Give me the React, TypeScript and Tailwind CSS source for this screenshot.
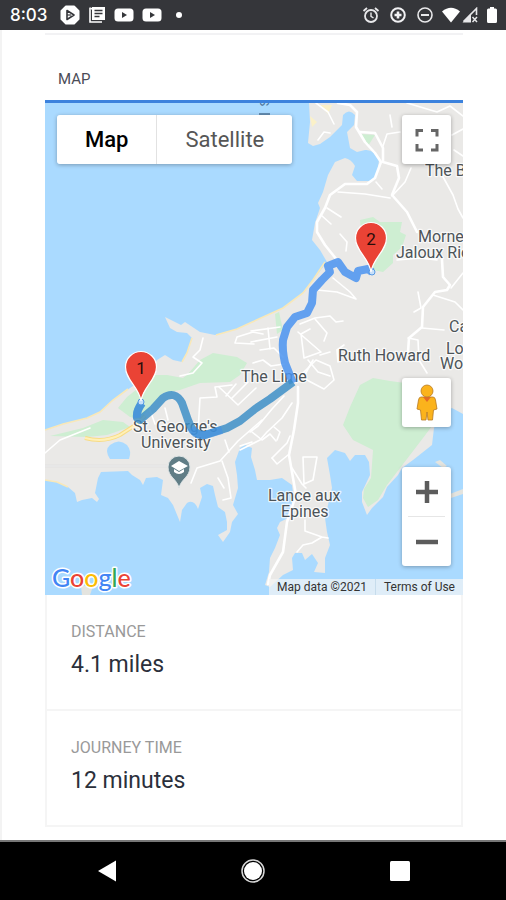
import React, { useState } from "react";

const mapFont = "font-['Roboto',sans-serif]";

const LAND =
  "M309 103 L310 122 L308 143 L313 146 L320 144 L330 137 L342 125 L343 115 Q349 108 355 115 L354 125 L347 132 L350 148 L357 152 L365 150 Q374 149 379 160 L377 175 Q374 182 368 181 L357 181 L352 175 L355 166 Q351 159 345 158 L335 162 L328 175 L323 192 L318 203 L320 208 L315 223 L312 240 L320 250 L327 262 L313 280 L303 293 L283 308 L250 323 L237 329 L215 335 L200 332 L185 322 L181 325 L173 321 L165 317 L170 328 L177 332 L187 333 L192 338 L187 353 L182 362 L173 360 L165 355 L157 360 L148 376 L130 388 L113 400 L100 412 L87 418 L63 424 L45 430 V480 L57 482 L68 487 L75 493 L77 502 L82 500 L92 498 L97 502 L99 499 L95 493 L98 478 L101 472 L128 471 L132 475 L140 480 L143 485 L146 478 L157 477 L163 480 L161 495 L168 498 L173 505 L180 522 L182 510 L187 503 Q194 499 198 509 L202 497 L200 488 L207 484 L213 486 L215 495 L218 507 L225 512 L227 522 L227 530 L218 535 L223 542 L230 532 L232 522 L238 514 L233 505 L238 488 L237 475 L235 462 L240 448 L245 445 L252 448 L251 457 L255 470 L257 480 L270 480 L282 478 L292 485 L294 500 L288 518 L280 522 L277 528 L280 535 L275 548 L270 558 L269 572 L265 585 L270 587 L283 575 L293 570 L292 558 L295 553 L302 553 L305 560 L312 554 L318 563 L314 572 L325 573 L325 558 L330 545 L327 532 L325 518 L328 505 L332 488 L330 475 L327 458 L335 450 L345 453 L350 461 L355 455 L365 455 L369 462 L370 475 L362 492 L362 502 L367 515 L372 508 L383 497 L387 487 L398 475 L402 468 L413 460 L432 445 L434 428 L440 413 L452 408 L463 414 V103 Z";

const PARKS = [
  "M213 353 L237 357 L247 363 L240 375 L230 382 L200 383 L180 390 L163 393 L150 407 L140 420 L130 417 L118 408 L127 397 L155 375 L167 375 L183 378 L188 374 L200 360 Z",
  "M50 436 L83 428 L103 420 L123 422 L130 427 L107 435 L87 437 Z",
  "M360 220 L373 217 L380 222 L402 222 L400 232 L406 235 L402 247 L393 255 L393 263 L383 272 L373 270 L362 240 Z",
  "M360 134 L375 135 L368 146 Z",
  "M373 378 L390 381 L405 383 L430 390 L432 426 L423 438 L410 455 L397 472 L387 485 L378 500 L368 507 L363 498 L364 489 L371 478 L373 450 L353 440 L343 425 L350 407 L360 385 Z",
  "M275 314 L279 312 L283 330 L277 334 Z",
];

const MAIN_ROADS = [
  "M338 103 L350 105 L357 112 L356 127 L365 142 L375 153 L381 162 L375 178 L367 184 L345 184 L330 195 L325 208 L317 222 L317 232 L325 245 L337 260",
  "M298 387 L298 403 L294 430 L289 455 L293 478 L296 495 L287 522 L283 552 L270 575 L268 584",
  "M442 260 L443 277 L450 285 L447 290 L435 292 L423 307 L422 327 L409 338 L408 352",
  "M360 132 L375 133 L383 148 L383 162 L397 166 L399 178 L392 195 L407 212 L417 232",
];

const ROADS = [
  "M338 192 L365 194 L390 198",
  "M383 146 L387 134 L400 132",
  "M392 196 L405 182 L411 168",
  "M442 175 L453 195 L458 209 L463 218",
  "M407 103 L437 112 L450 106 L463 116",
  "M390 115 L392 127",
  "M452 135 L463 129 M454 150 L463 156",
  "M327 208 L341 217 M321 215 L331 224",
  "M340 234 L347 242 L346 251 M376 182 L382 189",
  "M316 103 L328 112 L334 124 M318 140 L324 132 L330 133",
  "M397 260 L420 258 L437 260 M451 288 L463 273",
  "M433 295 L455 302 L463 310",
  "M418 292 L421 308 L414 312",
  "M422 328 L444 330 M408 338 L418 340 L419 360 L427 373",
  "M317 290 L337 292 L356 299 M333 278 L350 292 L356 299",
  "M300 324 L315 318 L330 316 L336 322 L343 321",
  "M315 319 L327 333 L324 341",
  "M298 332 L321 352 L304 358 L301 334 L310 329",
  "M293 383 L300 376 L316 360 L330 366 L334 380 L324 389 L303 378",
  "M308 360 L318 372 L330 376 M338 362 L337 350 L344 345",
  "M320 355 L330 352 M303 378 L313 360",
  "M251 331 L280 327 M251 342 L277 337",
  "M260 350 L274 348 L283 357 M268 328 L270 349",
  "M253 363 L263 360 L271 366 L284 364",
  "M284 396 L272 409 L258 426 L250 432",
  "M292 403 L282 418 L267 432 L260 440 L240 450",
  "M272 458 L287 443 L290 436 M252 432 L262 440 L270 434 L276 441",
  "M288 455 L277 464 L272 458 M274 427 L280 432 L277 440",
  "M303 457 L317 457 L313 480 L304 484 L303 457 M292 468 L302 484 L306 488",
  "M297 552 L303 545 L312 543 L322 537 L328 538 M305 520 L305 531 L322 537",
  "M203 338 L200 350 L193 357 L202 363 L193 373 L180 376",
  "M198 432 L200 398 L217 397 L215 387 L232 385",
  "M219 387 L238 405 M226 396 L236 384 M232 398 L248 382 M238 405 L256 388",
  "M237 337 L253 332 L263 334 M235 343 L254 344 M237 337 L235 343",
  "M262 420 L238 441 L220 461 L197 468 L191 483",
  "M222 461 L228 478 L231 498 L223 500 M218 478 L224 488",
  "M225 440 L229 452 M240 446 L252 442",
  "M45 453 L60 440 L90 428 M150 410 L155 424 M165 408 L168 420",
];

const LABELS = [
  { x: 425, y: 176, text: "The B" },
  { x: 418, y: 242, text: "Morne" },
  { x: 396, y: 258, text: "Jaloux Ric" },
  { x: 449, y: 332, text: "Ca" },
  { x: 446, y: 354, text: "Lo" },
  { x: 440, y: 369, text: "Wo" },
  { x: 338, y: 361, text: "Ruth Howard" },
  { x: 241, y: 382, text: "The Lime" },
  { x: 133, y: 432, text: "St. George's" },
  { x: 141, y: 448, text: "University" },
  { x: 268, y: 501, text: "Lance aux" },
  { x: 281, y: 517, text: "Epines" },
];

const PINS = [
  { x: 141, y: 367, label: "1" },
  { x: 371, y: 238, label: "2" },
];

const LOGO = [
  { char: "G", fill: "#4285f4" },
  { char: "o", fill: "#ea4335" },
  { char: "o", fill: "#fbbc05" },
  { char: "g", fill: "#4285f4" },
  { char: "l", fill: "#34a853" },
  { char: "e", fill: "#ea4335" },
];

const STATS = [
  { label: "DISTANCE", value: "4.1 miles" },
  { label: "JOURNEY TIME", value: "12 minutes" },
];

function StatusBar() {
  return (
    <header className="h-[30px] bg-[#35363a] flex items-center justify-between pl-[10px] pr-2 text-white">
      <div className="flex items-center">
        <span className="font-['Inter',sans-serif] font-medium text-[17px] leading-5">8:03</span>
        <svg className="ml-3 w-5 h-5" viewBox="0 0 20 20" fill="none">
          <path d="M6 1.500 H14 L18.500 6 V14 L14 18.500 H6 L1.500 14 V6 Z" fill="#fff" stroke="#fff" strokeWidth="2" strokeLinejoin="round" />
          <path d="M7 5.500 L14 10 L7 14.500 Z" stroke="#35363a" strokeWidth="1.6" strokeLinejoin="round" />
          <path d="M7 10 H11" stroke="#35363a" strokeWidth="1.2" />
        </svg>
        <svg className="ml-2 w-[18px] h-[18px]" viewBox="0 0 18 18">
          <path d="M2 2 V16 H14" fill="none" stroke="#fff" strokeWidth="1.6" />
          <path d="M1 1 L4 2 V1 H17 V14 H4 V4 Z" fill="#fff" />
          <path d="M6.5 4.5 H14.5 M6.5 7.5 H14.5 M6.5 10.5 H11.5" stroke="#35363a" strokeWidth="1.3" />
        </svg>
        {[0, 1].map(i => (
          <svg key={i} className="ml-2 w-5 h-4" viewBox="0 0 20 16">
            <rect x="0.5" y="1.5" width="19" height="13" rx="3.5" fill="#fff" />
            <path d="M8 5 L13 8 L8 11 Z" fill="#35363a" />
          </svg>
        ))}
        <span className="ml-[14px] w-[6px] h-[6px] rounded-full bg-white" />
      </div>

      <div className="flex items-center">
        <svg className="w-[18px] h-[18px]" viewBox="0 0 18 18" fill="none" stroke="#e8e8ea">
          <circle cx="9" cy="10" r="6" strokeWidth="1.8" />
          <path d="M9 6.5 V10.3 L11.5 12" strokeWidth="1.4" />
          <path d="M1.5 5 L5 2 M16.5 5 L13 2" strokeWidth="1.8" />
        </svg>
        <svg className="ml-[9px] w-[18px] h-[18px]" viewBox="0 0 18 18" fill="none" stroke="#f1f1f3">
          <circle cx="9" cy="9" r="6.8" strokeWidth="2" />
          <path d="M9 5.5 V12.5 M5.5 9 H12.5" strokeWidth="2.6" />
        </svg>
        <svg className="ml-[9px] w-[18px] h-[18px]" viewBox="0 0 18 18" fill="none" stroke="#e8e8ea">
          <circle cx="9" cy="9" r="7" strokeWidth="1.6" />
          <path d="M5 9 H13" strokeWidth="2" />
        </svg>
        <svg className="ml-2 w-[18px] h-4" viewBox="0 0 18 16">
          <path d="M0 4.5 Q9 -3 18 4.5 L9 15.5 Z" fill="#fff" />
        </svg>
        <svg className="ml-[2px] w-4 h-4" viewBox="0 0 16 16">
          <path d="M1.5 14.5 L14.5 1.5 V8" fill="none" stroke="#e8e8ea" strokeWidth="1.6" />
          <path d="M0.5 15.5 L9 6.5 V15.5 Z" fill="#e8e8ea" />
          <path d="M10.5 10 L15 15 M15 10 L10.5 15" stroke="#e8e8ea" strokeWidth="1.5" />
        </svg>
        <svg className="ml-2 w-3 h-4" viewBox="0 0 12 16">
          <path d="M4 0 H8 V1.5 H9.5 Q11 1.5 11 3 V14.5 Q11 16 9.5 16 H2.5 Q1 16 1 14.5 V3 Q1 1.5 2.5 1.5 H4 Z" fill="#fff" />
        </svg>
      </div>
    </header>
  );
}

function MapCanvas() {
  return (
    <svg
      className={`block w-full h-full ${mapFont}`}
      viewBox="45 103 418 492"
      preserveAspectRatio="xMidYMid slice"
    >
      <rect x="45" y="103" width="418" height="492" fill="#aadaff" />
      <path d={LAND} fill="#eae9e7" />
      <path d="M435 462 L440 460 L447 466 L443 468 Z M450 494 L463 489 V494 L451 498 Z M82 595 L81 586 H93 L90 595 Z" fill="#e4e4df" />
      {PARKS.map(d => (
        <path key={d} d={d} fill="#ceeed2" />
      ))}

      {/* Beaches */}
      <path
        d="M325 262 L313 280 L303 293 L283 308 L250 323 L237 329 L216 335 M192 338 L187 353 L182 362 M128 389 L113 400 L100 412 L87 418 L63 424 L45 430 M45 480 L57 482 L68 487"
        fill="none"
        stroke="#f9e8b8"
        strokeWidth="1.6"
      />
      <path d="M310 116 L317 122 L312 127 Z M320 105 H332 L328 114 Z" fill="#fbf1c8" />
      <path d="M110 459 Q104 450 110 445 Q119 438 127 445 Q132 451 129 459 Z" fill="#aadaff" />
      <path d="M45 466 H167" stroke="#dcdcdc" strokeWidth="2.5" />
      <path d="M45 466 H167" stroke="#f2f2f2" strokeWidth="1" />

      <g fill="none" stroke="#fff" strokeLinejoin="round" strokeLinecap="round">
        {ROADS.map(d => (
          <path key={d} d={d} strokeWidth="1.6" />
        ))}
        {MAIN_ROADS.map(d => (
          <path key={d} d={d} strokeWidth="2.6" />
        ))}
      </g>
      <path d="M85 438 Q104 443 120 435 L137 424 L145 416" fill="none" stroke="#f8dc84" strokeWidth="4" />
      <path d="M85 438 Q104 443 120 435 L137 424 L145 416" fill="none" stroke="#fff0b8" strokeWidth="2" />

      {/* University marker */}
      <path d="M179 488 C177 479 168 477 168 467 A11 11 0 0 1 190 467 C190 477 181 479 179 488 Z" fill="#607d86" stroke="#dfe5e6" strokeWidth="1" />
      <path d="M171 466 L179 461 L188 466 L179 471 Z M174 469 V472 Q179 476 184 472 V469 L179 472 Z" fill="#fff" />

      <g fill="#4d5458" stroke="#fff" strokeOpacity="0.75" strokeWidth="2.5" strokeLinejoin="round" paintOrder="stroke" fontSize="16">
        {LABELS.map(l => (
          <text key={l.text} x={l.x} y={l.y}>
            {l.text}
          </text>
        ))}
      </g>
      <text x="99" y="-260" transform="rotate(90)" fontSize="12" fill="#4d7398">
        S
      </text>
      <path d="M259 114 H270" stroke="#4d7398" strokeWidth="1.5" />

      <g fill="none" strokeWidth="8" strokeLinejoin="round">
        <path
          d="M293 383 L285 363 Q282 350 283 340 L287 327 L295 317 L307 313 L312 303 L313 290 L322 280 L330 272 L328 266 L338 262 L345 272 L356 278 L358 271 L368 269 L372 272"
          stroke="#4a93f0"
          strokeOpacity="0.85"
        />
        <path
          d="M142 403 Q136 411 137 418 L140 420 L153 409 L163 398 Q175 390 182 403 L188 420 Q193 436 205 435 L227 428 L240 421 L255 409 L270 399 L293 382"
          stroke="#3a8dc6"
          strokeOpacity="0.83"
        />
        <path d="M142 403 Q136 411 137 418 M191 428 Q195 436 205 435 L222 430" stroke="#3f90ea" strokeOpacity="0.5" />
      </g>
      <circle cx="141" cy="402" r="3" fill="#c7e0fa" stroke="#5599e4" />
      <circle cx="372" cy="272" r="3" fill="#c7e0fa" stroke="#5599e4" />

      {PINS.map(p => (
        <g key={p.label} transform={`translate(${p.x} ${p.y})`}>
          <path
            d="M0 34 C-2 20 -15.500 13 -15.500 0 A15.500 15.500 0 0 1 15.500 0 C15.500 13 2 20 0 34 Z"
            fill="#ea4335"
            stroke="#fff"
            strokeWidth="1.2"
          />
          <text y="7" textAnchor="middle" fontSize="17" fill="#2a0d0a">
            {p.label}
          </text>
        </g>
      ))}

      <text x="52" y="587" fontSize="25" className="font-['Lato',sans-serif] font-medium" stroke="#fff" strokeWidth="3" strokeLinejoin="round" paintOrder="stroke">
        {LOGO.map((l, i) => (
          <tspan key={i} fill={l.fill}>
            {l.char}
          </tspan>
        ))}
      </text>
    </svg>
  );
}

function MapPanel() {
  const [mapType, setMapType] = useState("Map");

  return (
    <div className="relative h-[495px] border-t-[3px] border-[#3c82dd] overflow-hidden">
      <MapCanvas />

      {/* Map type switch */}
      <div className="absolute left-3 top-3 flex h-[49px] text-[22px] leading-6 shadow-[0_1px_4px_rgba(0,0,0,0.3)] rounded-[3px]">
        {["Map", "Satellite"].map(type => (
          <button
            key={type}
            onClick={() => setMapType(type)}
            className={`px-7 bg-white first:rounded-l-[3px] last:rounded-r-[3px] last:border-l border-[#e2e2e2] ${
              mapType === type ? "font-medium text-black" : "text-[#565656]"
            }`}
          >
            {type}
          </button>
        ))}
      </div>

      <button
        aria-label="Toggle fullscreen view"
        className="absolute right-3 top-3 w-[49px] h-[49px] bg-white rounded-[3px] shadow-[0_1px_4px_rgba(0,0,0,0.3)] flex items-center justify-center"
      >
        <svg className="w-6 h-6" viewBox="0 0 24 24" fill="none" stroke="#666" strokeWidth="3">
          <path d="M2 8.500 V2.500 H8 M16 2.500 H22 V8.500 M22 16 V22 H16 M8 22 H2 V16" />
        </svg>
      </button>

      <div className="absolute right-3 bottom-[29px] flex flex-col gap-10">
        <button
          aria-label="Street View"
          className="w-[49px] h-[49px] bg-white rounded-[3px] shadow-[0_1px_4px_rgba(0,0,0,0.3)] flex items-center justify-center"
        >
          <svg className="w-6 h-10" viewBox="0 0 24 40" stroke="#b77a22" strokeWidth="0.8" strokeLinejoin="round">
            <path d="M6 14 H18 Q20 14 20.500 17 L22 26 L18.500 27 L17.500 37 H13 L12 29 L11 37 H6.500 L5.500 27 L2 26 L3.500 17 Q4 14 6 14 Z" fill="#fbb31c" />
            <path d="M8 14 L12 19 L16 14 Z" fill="#e56b25" stroke="none" />
            <circle cx="12" cy="8" r="6" fill="#fbb31c" />
          </svg>
        </button>
        <div className="w-[49px] bg-white rounded-[3px] shadow-[0_1px_4px_rgba(0,0,0,0.3)] flex flex-col items-center">
          <button aria-label="Zoom in" className="w-full h-[49px] flex items-center justify-center">
            <svg className="w-6 h-6" viewBox="0 0 24 24" stroke="#5c5c5c" strokeWidth="4.500">
              <path d="M1 12 H23 M12 1 V23" />
            </svg>
          </button>
          <div className="w-[37px] h-px bg-[#e6e6e6]" />
          <button aria-label="Zoom out" className="w-full h-[49px] flex items-center justify-center">
            <svg className="w-6 h-6" viewBox="0 0 24 24" stroke="#5c5c5c" strokeWidth="4.500">
              <path d="M1 12 H23" />
            </svg>
          </button>
        </div>
      </div>

      <div className="absolute right-0 bottom-0 h-4 flex text-xs leading-4 text-[#333]">
        <span className="px-2 bg-[#f5f5f5]/70 border-r border-[#c6dcec]">Map data ©2021</span>
        <a href="#" className="px-2 bg-[#f5f5f5]/70">
          Terms of Use
        </a>
      </div>
    </div>
  );
}

export default function App() {
  return (
    <div className={`min-h-screen flex flex-col bg-white ${mapFont}`}>
      <StatusBar />

      <main className="flex-1 border-l-2 border-[#f3f3f3] px-[43px] pt-[3px]">
        <div className="h-[2px] bg-[#f2f2f4]" />
        <h2 className="px-[13px] pt-[34px] pb-[11px] text-[15px] leading-5 text-[#4b4c57]">MAP</h2>
        <MapPanel />
        <dl className="border-x-2 border-[#f5f5f5]">
          {STATS.map(s => (
            <div key={s.label} className="px-6 pt-[27px] pb-[29px] border-b-2 border-[#f5f5f5]">
              <dt className="text-base leading-5 text-[#999]">{s.label}</dt>
              <dd className="mt-2 text-[23px] leading-[30px] text-[#2b303b]">{s.value}</dd>
            </div>
          ))}
        </dl>
      </main>

      <nav className="h-[60px] bg-black border-t-2 border-[#777] grid grid-cols-[1fr_80px_1fr] items-center">
        <button aria-label="Back" className="justify-self-center">
          <svg className="w-5 h-6" viewBox="0 0 20 24">
            <path d="M1 12 L19 1.500 V22.500 Z" fill="#fff" />
          </svg>
        </button>
        <button aria-label="Home" className="justify-self-center">
          <svg className="w-6 h-6" viewBox="0 0 24 24">
            <circle cx="12" cy="12" r="11" fill="none" stroke="#d8d8d8" strokeWidth="1.5" />
            <circle cx="12" cy="12" r="9" fill="#fff" />
          </svg>
        </button>
        <button aria-label="Recent apps" className="justify-self-center">
          <svg className="w-5 h-5" viewBox="0 0 20 20">
            <rect width="20" height="20" rx="1.5" fill="#fff" />
          </svg>
        </button>
      </nav>
    </div>
  );
}
